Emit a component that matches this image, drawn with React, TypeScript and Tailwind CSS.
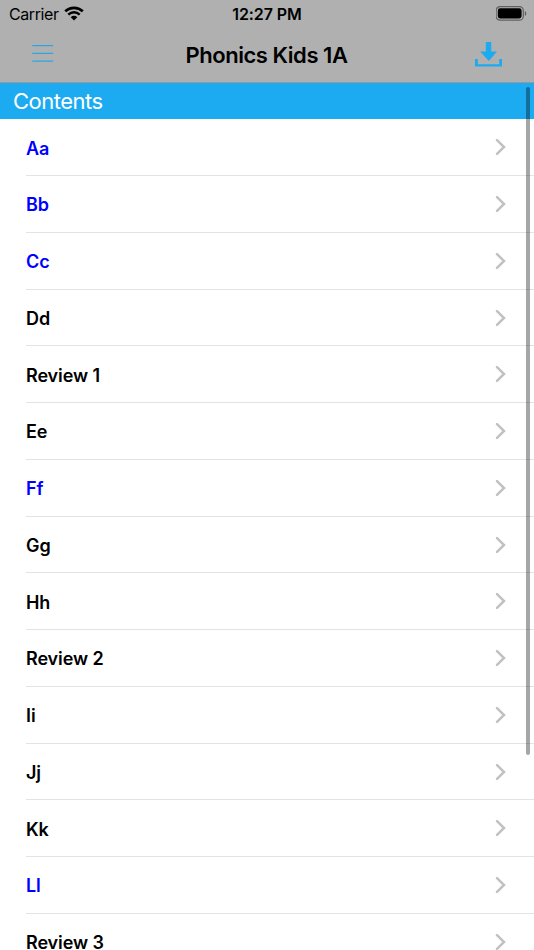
type Lesson = { title: string; highlighted?: boolean };

const lessons: Lesson[] = [
  { title: "Aa", highlighted: true },
  { title: "Bb", highlighted: true },
  { title: "Cc", highlighted: true },
  { title: "Dd" },
  { title: "Review 1" },
  { title: "Ee" },
  { title: "Ff", highlighted: true },
  { title: "Gg" },
  { title: "Hh" },
  { title: "Review 2" },
  { title: "Ii" },
  { title: "Jj" },
  { title: "Kk" },
  { title: "Ll", highlighted: true },
  { title: "Review 3" },
];

function WifiIcon() {
  return (
    <svg width="20" height="15" viewBox="0 0 20 15" fill="none" className="mb-[2px]" aria-hidden="true">
      <path d="M1.2 5.3C6.2.7 13.8.7 18.8 5.3" stroke="#000" strokeWidth="2.6" />
      <path d="M4.3 8.6c3.3-3 8.1-3 11.4 0" stroke="#000" strokeWidth="2.5" />
      <path d="M6.7 11.2c1.9-1.8 4.7-1.8 6.6 0L10 14.5z" fill="#000" />
    </svg>
  );
}

function BatteryIcon() {
  return (
    <svg width="32" height="15" viewBox="0 0 32 15" className="mb-px" aria-hidden="true">
      <rect x=".1" y=".6" width="27.2" height="13.6" rx="4" fill="none" stroke="#606060" strokeWidth="1.2" />
      <rect x="1.8" y="2.3" width="23.8" height="10.2" rx="2.4" fill="#000" />
      <path d="M28.8 5v5c2-.8 2-4.2 0-5z" fill="#606060" />
    </svg>
  );
}

function MenuIcon() {
  return (
    <svg width="22" height="18" viewBox="0 0 22 18" className="mb-[2px] block" aria-hidden="true">
      <path d="M.3 0h20.8v1.2H.3zM.3 7.8h20.8V9H.3zM.3 15.4h20.8v1.4H.3z" fill="#28a7e2" />
    </svg>
  );
}

function DownloadIcon() {
  return (
    <svg width="28" height="26" viewBox="0 0 28 26" className="block" aria-hidden="true">
      <path d="M10.8 0h5.4v9.4H22L13.8 19 5.2 9.4h5.6z" fill="#1cabf1" />
      <path d="M0 17h2.8v5.3h21.4V17H27v7.6H0z" fill="#1cabf1" />
    </svg>
  );
}

function Chevron() {
  return (
    <svg width="12" height="18" viewBox="0 0 12 18" fill="none" className="mb-px" aria-hidden="true">
      <path d="M2 2.2 9 9l-7 6.8" stroke="#c1c1c4" strokeWidth="2.5" strokeLinecap="round" strokeLinejoin="miter" />
    </svg>
  );
}

function LessonRow({ title, highlighted }: Lesson) {
  return (
    <li className="ml-[26px] flex h-[56.75px] shrink-0 items-center justify-between border-b border-[#e3e3e4] pt-[1.5px] pr-[27px]">
      <span
        className={
          highlighted
            ? "pt-[1.5px] text-[18px] leading-[22px] font-semibold tracking-[-0.1px] text-[#0000ff]"
            : "pt-[1.5px] text-[18px] leading-[22px] font-semibold tracking-[-0.1px] text-black"
        }
      >
        {title}
      </span>
      <Chevron />
    </li>
  );
}

export default function App() {
  return (
    <div className="relative flex h-[950px] w-[534px] flex-col overflow-hidden bg-white font-['Inter','Liberation_Sans',sans-serif] text-black">
      <header className="flex h-[83px] shrink-0 flex-col border-b border-[#969899] bg-[#b0b0b0]">
        <div className="grid h-[27px] grid-cols-3 items-center pr-[6px] pl-[9px]">
          <div className="flex items-center gap-[5px]">
            <span className="text-[16px] leading-[28px] tracking-[-0.4px]">Carrier</span>
            <WifiIcon />
          </div>
          <span className="pr-[3px] text-center text-[16px] leading-[28px] font-semibold tracking-[-0.1px]">
            12:27 PM
          </span>
          <div className="flex justify-end">
            <BatteryIcon />
          </div>
        </div>
        <div className="flex h-[55px] items-center justify-between pr-[31px] pl-[32px]">
          <button type="button" aria-label="Menu" className="w-[26px]">
            <MenuIcon />
          </button>
          <h1 className="pt-px text-[22px] font-semibold tracking-[-0.45px]">Phonics Kids 1A</h1>
          <button type="button" aria-label="Download">
            <DownloadIcon />
          </button>
        </div>
      </header>
      <h2 className="h-[36px] shrink-0 bg-[#1cabf1] pl-[13px] text-[22px] leading-[37px] tracking-[-0.5px] text-white">
        Contents
      </h2>
      <ul className="flex flex-col pt-[0.25px]">
        {lessons.map((lesson) => (
          <LessonRow key={lesson.title} {...lesson} />
        ))}
      </ul>
      <div className="absolute top-[87px] right-[4px] h-[668px] w-[4px] rounded-full bg-black/35" />
    </div>
  );
}
